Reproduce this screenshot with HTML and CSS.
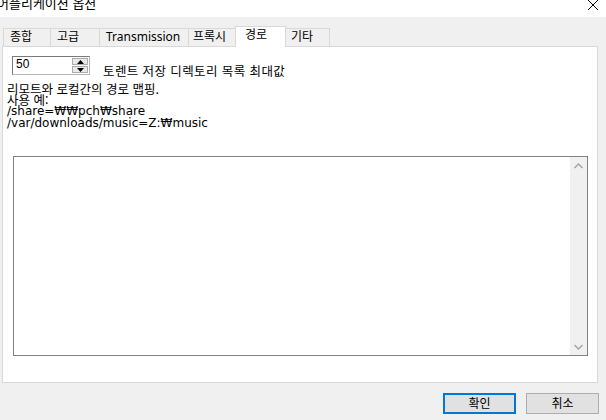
FILE: index.html
```html
<!DOCTYPE html>
<html lang="ko">
<head>
<meta charset="utf-8">
<link rel="stylesheet" href="styles.css">
</head>
<body>
<div class="window">
  <div class="titlebar">
    <span class="title">어플리케이션 옵션</span>
    <svg class="close" width="12" height="12" viewBox="0 0 12 12"><path d="M1 1 L11 11 M11 1 L1 11" stroke="#000" stroke-width="1" fill="none"/></svg>
  </div>
  <div class="tabs">
    <div class="tab t1">종합</div>
    <div class="tab t2">고급</div>
    <div class="tab t3">Transmission</div>
    <div class="tab t4">프록시</div>
    <div class="tab active">경로</div>
    <div class="tab t6">기타</div>
  </div>
  <div class="panel">
    <div class="row">
      <div class="spin">
        <span class="spin-val">50</span>
        <div class="spin-btns">
          <div class="sbtn"><svg width="7" height="4" viewBox="0 0 7 4"><path d="M0 4 L3.5 0 L7 4 Z" fill="#000"/></svg></div>
          <div class="sbtn"><svg width="7" height="4" viewBox="0 0 7 4"><path d="M0 0 L3.5 4 L7 0 Z" fill="#000"/></svg></div>
        </div>
      </div>
      <span class="label">토렌트 저장 디렉토리 목록 최대값</span>
    </div>
    <div class="info">
      <div>리모트와 로컬간의 경로 맵핑.</div>
      <div>사용 예:</div>
      <div class="latin">/share=₩₩pch₩share</div>
      <div class="latin">/var/downloads/music=Z:₩music</div>
    </div>
    <div class="textarea">
      <div class="content"></div>
      <div class="scrollbar">
        <svg width="9" height="6" viewBox="0 0 9 6"><path d="M0.5 5 L4.5 1 L8.5 5" stroke="#a3a3a3" stroke-width="1.4" fill="none"/></svg>
        <svg width="9" height="6" viewBox="0 0 9 6"><path d="M0.5 1 L4.5 5 L8.5 1" stroke="#a3a3a3" stroke-width="1.4" fill="none"/></svg>
      </div>
    </div>
  </div>
  <div class="buttons">
    <div class="btn default">확인</div>
    <div class="btn">취소</div>
  </div>
</div>
</body>
</html>
```
FILE: styles.css
```css
html, body {
  margin: 0;
  padding: 0;
}
body {
  width: 606px;
  height: 420px;
  overflow: hidden;
  background: #f0f0f0;
  font-family: "Noto Sans CJK KR", "Noto Sans", sans-serif;
  color: #000;
}
.window {
  display: flex;
  flex-direction: column;
  height: 420px;
}
.titlebar {
  height: 17px;
  background: #fff;
  display: flex;
  justify-content: space-between;
  align-items: flex-start;
  overflow: hidden;
}
.title {
  font-size: 13px;
  line-height: 13px;
  margin-top: -4px;
  margin-left: -3px;
  color: #000;
}
.close {
  margin-top: -1px;
  margin-right: 7px;
}
.tabs {
  display: flex;
  align-items: flex-end;
  padding-left: 3px;
  margin-top: 9px;
  height: 20px;
  position: relative;
  z-index: 2;
}
.tab {
  box-sizing: border-box;
  height: 18px;
  border: 1px solid #d9d9d9;
  border-bottom: none;
  border-right: none;
  background: #f0f0f0;
  font-family: "Noto Sans", "Noto Sans CJK KR", sans-serif;
  font-size: 12px;
  line-height: 16px;
  white-space: nowrap;
}
.t1 { width: 47px; padding-left: 6px; }
.t2 { width: 49px; padding-left: 6px; }
.t3 { width: 89px; padding-left: 6px; }
.t4 { width: 47px; padding-left: 4px; }
.t6 { width: 44px; padding-left: 5px; border-right: 1px solid #d9d9d9; border-left: none; }
.tab.active {
  height: 21px;
  width: 51px;
  padding-left: 9px;
  background: #fff;
  border-right: 1px solid #d9d9d9;
  margin-bottom: -1px;
  line-height: 15px;
}
.panel {
  margin: 0 8px 0 2px;
  border: 1px solid #d9d9d9;
  background: #fff;
  padding: 9px 9px 0 4px;
  box-sizing: border-box;
  height: 337px;
  display: flex;
  flex-direction: column;
  position: relative;
  z-index: 1;
}
.row {
  display: flex;
  align-items: flex-start;
  margin-left: 5px;
}
.spin {
  width: 78px;
  height: 19px;
  border: 1px solid #7a7a7a;
  border-right-color: #b5b5b5;
  border-bottom-color: #b5b5b5;
  box-sizing: border-box;
  display: flex;
  justify-content: space-between;
  background: #fff;
}
.spin-val {
  font-family: "Liberation Sans", Arial, sans-serif;
  font-size: 12px;
  line-height: 15px;
  padding-left: 3px;
}
.spin-btns {
  display: flex;
  flex-direction: column;
  width: 16px;
  margin: 1px 1px 1px 0;
  gap: 1px;
}
.sbtn {
  flex: 1;
  background: #e9e9e9;
  border: 1px solid #acacac;
  box-sizing: border-box;
  display: flex;
  align-items: center;
  justify-content: center;
}
.label {
  font-size: 12.5px;
  line-height: 12px;
  margin-left: 13px;
  margin-top: 9px;
  letter-spacing: 0.4px;
}
.info {
  font-size: 12.5px;
  line-height: 11px;
  margin-top: 6px;
  margin-left: 0;
}
.latin {
  font-family: "DejaVu Sans", "Noto Sans CJK KR", sans-serif;
  font-size: 12px;
  line-height: 12px;
}
.textarea {
  margin-top: 27px;
  margin-left: 6px;
  width: 575px;
  height: 200px;
  border: 1px solid #828282;
  box-sizing: border-box;
  display: flex;
}
.content {
  flex: 1;
}
.scrollbar {
  width: 17px;
  background: #f0f0f0;
  display: flex;
  flex-direction: column;
  justify-content: space-between;
  align-items: center;
  padding: 6px 0 5px;
}
.buttons {
  display: flex;
  justify-content: flex-end;
  gap: 10px;
  padding-right: 7px;
  margin-top: 10px;
}
.btn {
  width: 73px;
  height: 21px;
  box-sizing: border-box;
  border: 1px solid #adadad;
  background: #e1e1e1;
  font-size: 12px;
  line-height: 18px;
  text-align: center;
}
.btn.default {
  border: 2px solid #0078d7;
  line-height: 16px;
}
```
